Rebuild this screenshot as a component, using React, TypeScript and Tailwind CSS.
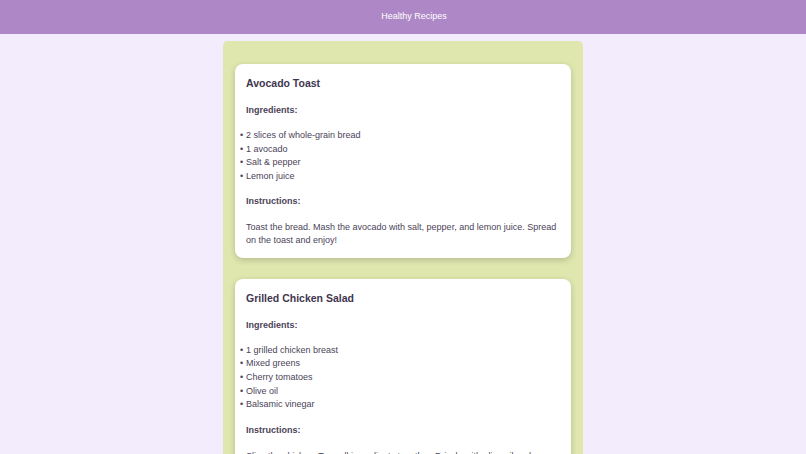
import React from "react";

const recipes = [
  {
    title: "Avocado Toast",
    ingredients: ["2 slices of whole-grain bread", "1 avocado", "Salt & pepper", "Lemon juice"],
    instructions:
      "Toast the bread. Mash the avocado with salt, pepper, and lemon juice. Spread on the toast and enjoy!",
  },
  {
    title: "Grilled Chicken Salad",
    ingredients: ["1 grilled chicken breast", "Mixed greens", "Cherry tomatoes", "Olive oil", "Balsamic vinegar"],
    instructions:
      "Slice the chicken. Toss all ingredients together. Drizzle with olive oil and balsamic vinegar.",
  },
];

function RecipeCard({ recipe }: { recipe: (typeof recipes)[number] }) {
  return (
    <div className="bg-white rounded-[8px] shadow-[0_2px_6px_rgba(0,0,0,0.18)] px-[11px] pt-[12px] pb-[11px] text-[#4b4358]">
      <h3 className="text-[10.5px] leading-[14px] font-bold text-[#3f3650]">{recipe.title}</h3>
      <h4 className="mt-[14px] text-[9px] leading-[13px] font-bold">Ingredients:</h4>
      <ul className="mt-[12px] text-[9px] leading-[13.6px]">
        {recipe.ingredients.map((item) => (
          <li key={item} className="flex -ml-[6px]">
            <span className="w-[6px] shrink-0">•</span>
            {item}
          </li>
        ))}
      </ul>
      <h4 className="mt-[12px] text-[9px] leading-[13px] font-bold">Instructions:</h4>
      <p className="mt-[13px] text-[9px] leading-[12.7px]">{recipe.instructions}</p>
    </div>
  );
}

export default function App() {
  return (
    <div className="min-h-[454px] bg-[#f3ecfd] font-['Liberation_Sans',Arial,sans-serif]">
      <header className="h-[34px] bg-[#ae88c6] flex items-center justify-center pl-[22px]">
        <h1 className="text-white text-[9px]">Healthy Recipes</h1>
      </header>
      <main className="w-[360px] mx-auto mt-[7px] bg-[#dfe6ae] rounded-[5px] px-[12px] pt-[23px] pb-[22px] flex flex-col gap-[21px]">
        {recipes.map((r) => (
          <RecipeCard key={r.title} recipe={r} />
        ))}
      </main>
    </div>
  );
}
